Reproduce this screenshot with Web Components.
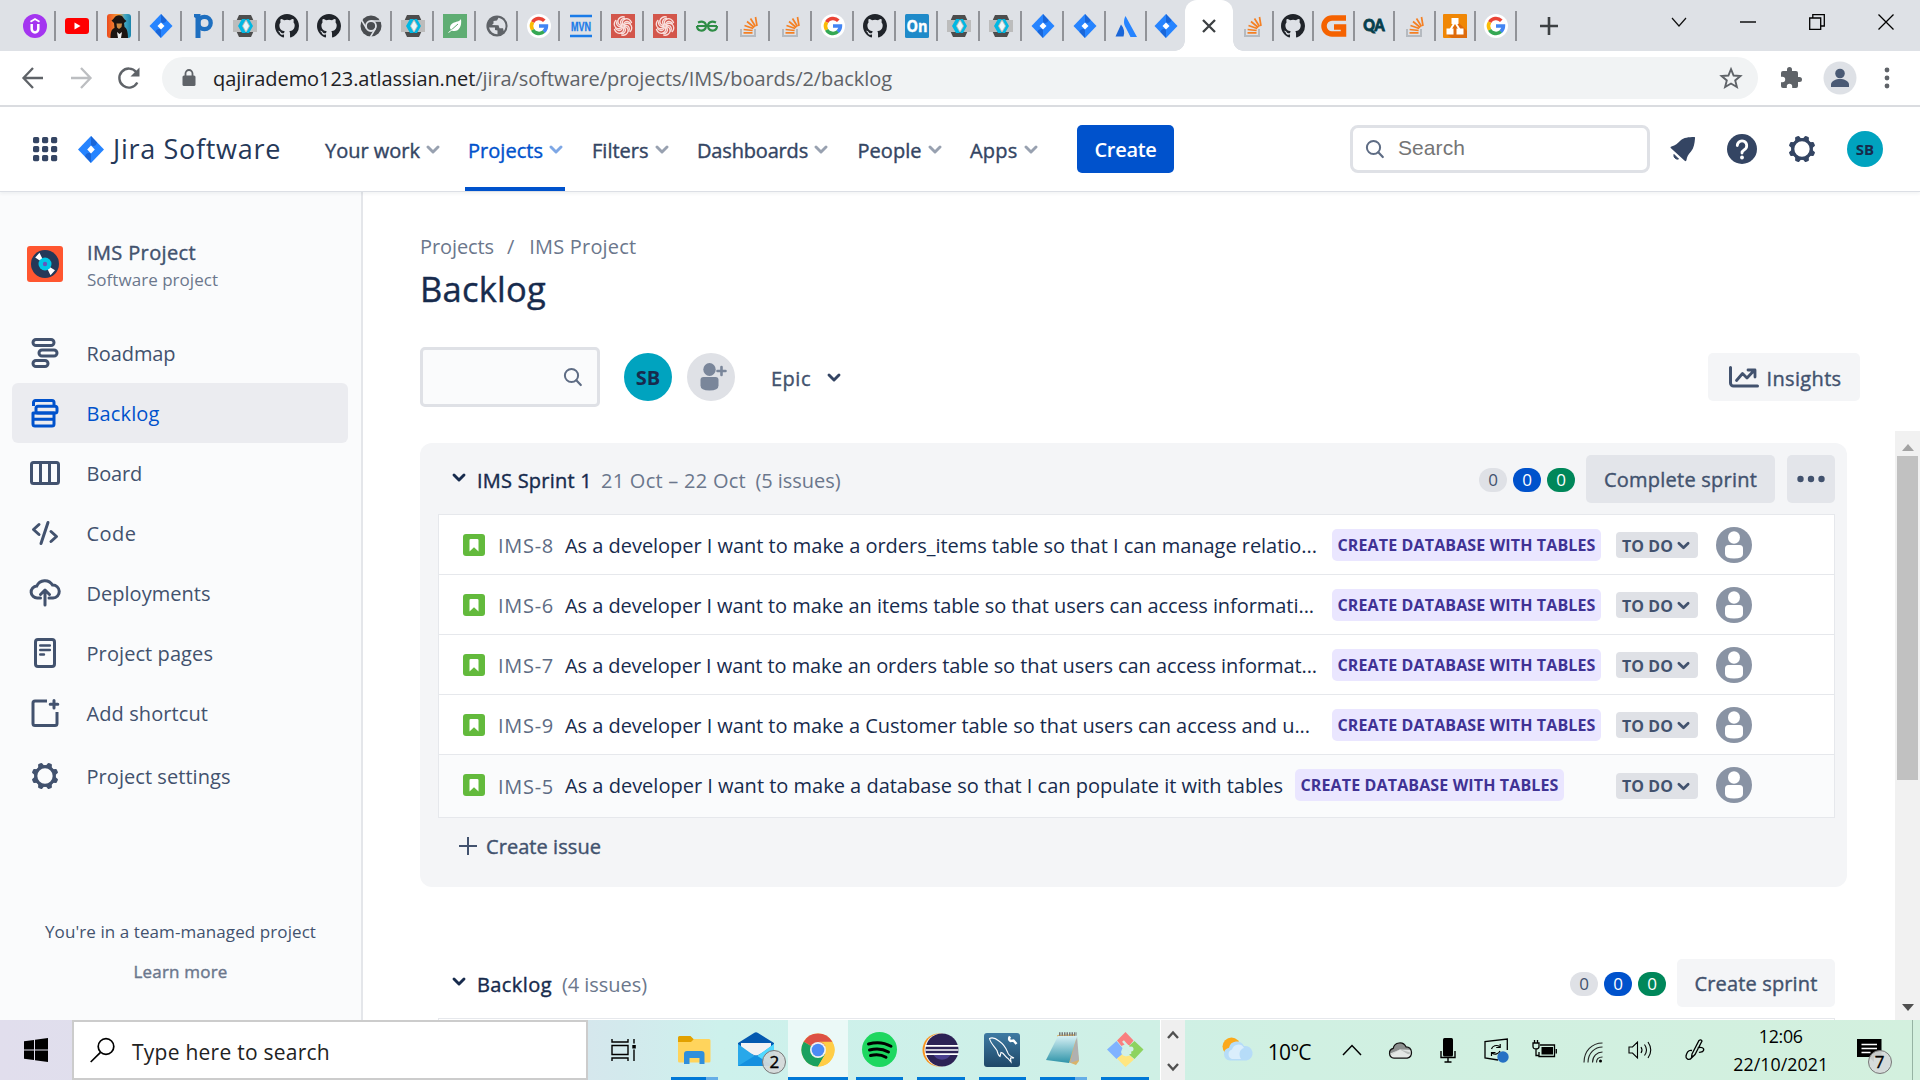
<!DOCTYPE html>
<html lang="en">
<head>
<meta charset="utf-8">
<title>Backlog - IMS Project - Jira</title>
<style>
html,body{margin:0;height:100%;overflow:hidden;background:#fff}
body{font-family:"Open Sans","Noto Sans",sans-serif;font-size:20px;color:#172b4d}
</style>
</head>
<body>
<desktop-app></desktop-app>
<script>
const FAV = {
udemy:`<circle cx="12" cy="12" r="12" fill="#a435f0"/><path d="M7.500 7.800 12 5 16.500 7.800" fill="none" stroke="#fff" stroke-width="1.800"/><path d="M8.700 10v5a3.300 3.400 0 0 0 6.600 0v-5" fill="none" stroke="#fff" stroke-width="2.500"/>`,
youtube:`<rect y="4" width="24" height="16" rx="3" fill="#f00"/><path d="M9.500 8.500v7l6-3.500z" fill="#fff"/>`,
poster:`<defs><linearGradient id="a"><stop stop-color="#ec4a1c"/><stop offset=".5" stop-color="#f7a23b"/><stop offset=".75" stop-color="#3fa6c4"/><stop offset="1" stop-color="#1c84ab"/></linearGradient></defs><rect width="24" height="24" rx="3" fill="url(#a)"/><path d="M4.500 6.500C6 6 7.500 3 9 2c2-1 4-1 6 0 1.500 1.500 2 3.500 4.500 5l-2.500 2 .500 4c2 1 3.500 4 3.500 11H3.500c0-6 1-9 4-10L7 9z" fill="#1c1512"/><path d="M9.500 9.500h5.500l-.500 3.500-2.500 2-2-1.500z" fill="#c98a45"/><path d="m10 18 1 6h3l1-6-2.500 2z" fill="#eee"/>`,
jira:`<path d="M12 0 23.500 12 12 24 .5 12z" fill="#2684ff"/><path d="m12 0 5.500 6c-1 3-3 3.500-5.500 2.500z" fill="#1a66d8"/><path d="m12 24-5.500-6c1-3 3-3.500 5.500-2.500z" fill="#1a66d8"/><path d="m12 8.500 3.500 3.500-3.500 3.500L8.500 12z" fill="#fff"/>`,
pluto:`<path d="M3 0h6.500v24H4.500V4L3 3z" fill="#1e6fc0"/><circle cx="13.500" cy="9" r="6.200" fill="none" stroke="#1e6fc0" stroke-width="4.300"/>`,
keycloak:`<path d="M6 1h12l5 11-5 11H6L1 12z" fill="#4d4d4d"/><rect y="6" width="24" height="12" fill="#bcbcbc"/><path d="M9 5h4l-4 7 4 7H9l-4-7zM13 5h3l4 7-4 7h-3l4-7z" fill="#00b8e3"/><path d="M10 12 13 7l3 5-3 5z" fill="#eaf8fb"/>`,
github:`<path transform="scale(1.5)" d="M8 0C3.580 0 0 3.580 0 8c0 3.540 2.290 6.530 5.470 7.590.4.070.55-.17.55-.38v-1.490c-2.010.37-2.530-.49-2.690-.94-.09-.23-.48-.94-.82-1.130-.28-.15-.68-.52-.01-.53.63-.01 1.080.58 1.230.82.72 1.210 1.870.87 2.330.66.07-.52.28-.87.51-1.070-1.780-.2-3.640-.89-3.640-3.950 0-.87.31-1.590.82-2.150-.08-.2-.36-1.020.08-2.120 0 0 .67-.21 2.200.82a7.600 7.600 0 0 1 4 0c1.530-1.040 2.200-.82 2.200-.82.44 1.100.16 1.920.08 2.120.51.56.82 1.270.82 2.150 0 3.070-1.870 3.750-3.650 3.950.29.25.54.73.54 1.480v2.200c0 .21.15.46.55.38A8 8 0 0 0 16 8c0-4.420-3.580-8-8-8z" fill="#20242a"/>`,
chrome:`<circle cx="12" cy="12" r="10.500" fill="#4a4d51"/><circle cx="12" cy="12" r="5" fill="none" stroke="#dee1e6" stroke-width="1.800"/><path d="M12 7h10M7.600 14.500 2.500 6M16.400 14.500l-5 8.500" stroke="#dee1e6" stroke-width="1.500"/>`,
leaf:`<rect width="24" height="24" fill="#5fad73"/><path d="M18 5c1 7-2 13-8 12-4-1-4-6 0-8 3-1.500 6-1 8-4z" fill="#fff"/><path d="m6 18 9-8" stroke="#5fad73"/><path d="m5.500 18.500 4-3" stroke="#fff"/>`,
globe:`<circle cx="12" cy="12" r="10.600" fill="#5f6368"/><path d="M4 13.500l6 0v2.500l2.500.500V20.200A8.500 8.500 0 0 1 4 13.500zM13.500 3.800 12 6.500 8.500 7v2.500L7 11l6.500.300 1 3H18l.800 3A8.500 8.500 0 0 0 13.500 3.800z" fill="#dee1e6"/>`,
google:`<circle cx="12" cy="12" r="12" fill="#fff"/><g fill="none" stroke-width="3.600"><path d="M5.600 8.200A7.400 7.400 0 0 1 17.300 6.700" stroke="#ea4335"/><path d="M5.600 15.800a7.400 7.400 0 0 1 0-7.600" stroke="#fbbc05"/><path d="M17 17.500a7.400 7.400 0 0 1-11.400-1.700" stroke="#34a853"/><path d="M12 12h7.400a7.400 7.400 0 0 1-2.600 5.600" stroke="#4285f4"/></g>`,
mvn:`<path d="M1 2h22M1 22h22" stroke="#1a7be8" stroke-width="2.500"/><text x="12" y="16.500" text-anchor="middle" textLength="20" lengthAdjust="spacingAndGlyphs" font-family="Liberation Sans" font-weight="700" font-size="12.500" fill="#1a7be8" stroke="#1a7be8" stroke-width=".3">MVN</text>`,
swirl:`<rect width="24" height="24" fill="#d3564b"/><g fill="none" stroke="#f9dfdc" stroke-width="1.350" stroke-linecap="round">${[0,60,120,180,240,300].map(a=>`<path transform="rotate(${a} 12 12)" d="M12 11c-1.500-2.500-.500-5 2-6s5.500.500 6.500 3.500M12.800 10.500c0-2 1.500-3.200 3.500-3 1.500.200 2.500 1 3 2"/>`).join('')}</g>`,
gfg:`<g fill="none" stroke="#2f8d46" stroke-width="2.200"><path d="M2 12h20M3 8.500c5-2 8 0 8 3.500s-3 5-5.500 4.500S2 14 2 12M21 8.500c-5-2-8 0-8 3.500s3 5 5.500 4.500S22 14 22 12"/></g>`,
so:`<path d="M4 15v7h14v-7" fill="none" stroke="#b5bac0" stroke-width="2"/><path d="M6.500 18.800h9M6.600 15.500l9 1M7.500 11.500l8.700 3M10 7.500l7.300 6M13.500 4.500l5 8M18.500 3l1.500 9" stroke="#f48024" stroke-width="1.700"/>`,
on:`<rect width="24" height="24" rx="1.500" fill="#1f8ac9"/><text x="12" y="17.500" text-anchor="middle" textLength="21" lengthAdjust="spacingAndGlyphs" font-family="Open Sans" font-weight="700" font-size="16" fill="#fff" stroke="#fff" stroke-width=".4">On</text>`,
atlas:`<path d="M11.500 2C9 7 10 11 12 14l4.500 9H23z" fill="#2684ff"/><path d="M7 10.500 1.500 22.500h8C11 18 10 14 7 10.500z" fill="#1a66d8"/>`,
orange:`<path d="M24 4H10a7.500 7.500 0 0 0 0 16h11.500v-7H12" fill="none" stroke="#f56200" stroke-width="5.500"/>`,
qa:`<text x="12" y="17" text-anchor="middle" textLength="21.500" lengthAdjust="spacingAndGlyphs" font-family="Lato" font-weight="900" font-size="16" fill="#073f4d" stroke="#073f4d" stroke-width=".9">QA</text>`,
draw:`<rect width="24" height="24" rx="1" fill="#f08705"/><path d="M14 9h2l8 8v7H9l-6-4z" fill="#de6b0c"/><path d="M12 8 6 18M12 8l6 10" stroke="#fff" stroke-width="2"/><path d="M8.500 4h7v6h-7zM3.500 14.500h7v6h-7zM13.500 14.500h7v6h-7z" fill="#fff"/>`
};
const gear = c => `<circle cx="14" cy="14" r="9.300" fill="none" stroke="${c}" stroke-width="3.300"/>` +
  [0,45,90,135,180,225,270,315].map(a=>`<path transform="rotate(${a+22.5} 14 14)" d="M10.800 4.300 11.700 1.500q.2-.9 1-.9h2.600q.8 0 1 .9l.9 2.800z" fill="${c}"/>`).join('');
const person = `<circle cx="18" cy="18" r="18" fill="#8993a4"/><ellipse cx="18" cy="10.500" rx="6" ry="6.200" fill="#fff"/><path d="M9 21.500a3.500 3.500 0 0 1 3.500-3.500h11a3.500 3.500 0 0 1 3.500 3.500V27q0 4.500-9 4.500T9 27z" fill="#fff"/>`;
const ICON = {
chev:[14,9,`<path d="m2 2 5 5 5-5" fill="none" stroke="currentColor" stroke-width="2.900" stroke-linecap="round" stroke-linejoin="round"/>`],
back:[24,24,`<path d="M22 12H3M12 2 2.500 12 12 22" fill="none" stroke="currentColor" stroke-width="2.300"/>`],
fwd:[24,24,`<path d="M2 12h19M12 2l9.500 10L12 22" fill="none" stroke="currentColor" stroke-width="2.300"/>`],
reload:[24,24,`<path d="M20.300 16.500A9.500 9.500 0 1 1 19.200 6" fill="none" stroke="#5f6368" stroke-width="2.400"/><path d="M22.500 1.500v9h-9z" fill="#5f6368"/>`],
lock:[14,18,`<rect y="6.500" x=".5" width="13" height="10.500" rx="1.500" fill="#5f6368"/><path d="M3.500 7V4.500a3.500 3.500 0 0 1 7 0V7" fill="none" stroke="#5f6368" stroke-width="1.800"/>`],
star:[24,24,`<path d="m12 3.200 2.600 6.300 6.800.5-5.200 4.400 1.700 6.700-5.900-3.600-5.900 3.600 1.700-6.700L2.600 10l6.800-.5z" fill="none" stroke="#5f6368" stroke-width="1.900"/>`],
puzzle:[24,24,`<path d="M20.500 11H19V7a2 2 0 0 0-2-2h-4V3.500a2.500 2.500 0 0 0-5 0V5H4a2 2 0 0 0-2 2v3.800h1.500a2.700 2.700 0 0 1 0 5.400H2V20a2 2 0 0 0 2 2h3.800v-1.500a2.700 2.700 0 0 1 5.400 0V22H17a2 2 0 0 0 2-2v-4h1.500a2.500 2.500 0 0 0 0-5z" fill="#5f6368"/>`],
profile:[34,34,`<circle cx="17" cy="17" r="16.500" fill="#dee1e6"/><circle cx="17" cy="12.500" r="4.800" fill="#4a5a74"/><path d="M8 26v-2.500c0-3.500 5-5.500 9-5.500s9 2 9 5.500V26z" fill="#4a5a74"/>`],
vdots:[6,22,`<circle cx="3" cy="3" r="2.400" fill="#5f6368"/><circle cx="3" cy="11" r="2.400" fill="#5f6368"/><circle cx="3" cy="19" r="2.400" fill="#5f6368"/>`],
grid:[24,24,[0,9,18].map(x=>[0,9,18].map(y=>`<rect x="${x}" y="${y}" width="6.200" height="6.200" rx="1.600" fill="#344563"/>`).join('')).join('')],
jira:[26,27,`<path d="M13 0 26 13.500 13 27 0 13.500z" fill="#2684ff"/><path d="m13 0 6 6.500C18 10 16 10.500 13 9.500z" fill="#1a66d8"/><path d="m13 27-6-6.500c1-3.500 3-4 6-3z" fill="#1a66d8"/><path d="m13 9.500 3.800 4-3.800 4-3.800-4z" fill="#fff"/>`],
glass:[20,20,`<circle cx="8.500" cy="8.500" r="6.600" fill="none" stroke="#5e6c84" stroke-width="2"/><path d="m13.300 13.300 4.500 4.700" stroke="#5e6c84" stroke-width="2.200" stroke-linecap="round"/>`],
bell:[26,26,`<path d="M1.500 10.500c4-1 6-3 9-6S19 1 24 1c1 0 1.300.5 1 1.500-.5 5-1 9.500-4 13s-4 5-4.500 8.500c-.2 1.200-1 1.500-1.800.700L1 12.300c-.8-.8-.5-1.600.5-1.800z" fill="#344563"/><path d="M4 18.500a3.700 3.700 0 0 0 4.500 4.500z" fill="#344563" stroke="#344563"/>`],
help:[30,30,`<circle cx="15" cy="15" r="15" fill="#344563"/><path d="M10.300 11.500a4.700 4.700 0 1 1 7 4.200c-1.500.9-2.300 1.500-2.300 3.300" fill="none" stroke="#fff" stroke-width="2.800" stroke-linecap="round"/><circle cx="15" cy="23.500" r="1.900" fill="#fff"/>`],
gear:[28,28,gear('#344563')], gear2:[28,28,gear('#42526e')],
vinyl:[36,36,`<rect width="36" height="36" rx="3" fill="#ff5630"/><circle cx="18" cy="18" r="14" fill="#253858"/><path d="m18 18-9.800-6.500 4.300-4.700zM18 18l10 6.200-4.500 5z" fill="#fff"/><circle cx="18" cy="18" r="6.500" fill="#00c7e6"/><circle cx="18" cy="18" r="2.200" fill="#6554c0"/>`],
roadmap:[30,32,`<g fill="none" stroke="#42526e" stroke-width="3"><rect x="3" y="2.500" width="21" height="6" rx="3"/><rect x="9" y="13" width="18" height="6" rx="3"/><rect x="3" y="23.500" width="15" height="6" rx="3"/></g>`],
backlog:[30,30,`<g fill="none" stroke="#0052cc" stroke-width="3" stroke-linejoin="round"><path d="M3.500 8V4.500a2 2 0 0 1 2-2H22a2 2 0 0 1 2 2V8"/><rect x="6" y="8.300" width="21" height="6.700" rx="2"/><path d="M3 15h21v11a2 2 0 0 1-2 2H5a2 2 0 0 1-2-2zM3 21.300h21"/></g>`],
board:[30,24,`<rect x="1.500" y="1.500" width="27" height="21" rx="2" fill="none" stroke="#42526e" stroke-width="3"/><path d="M10.500 2v20M19.500 2v20" stroke="#42526e" stroke-width="3"/>`],
code:[28,26,`<path d="M8 4.500 2.500 9.500 8 14.500M20 11.500l5.500 5-5.500 5M17 2.500l-7 21" fill="none" stroke="#42526e" stroke-width="3" stroke-linecap="round" stroke-linejoin="round"/>`],
deploy:[30,28,`<path d="M10.500 19H7.500a6 6 0 0 1-.7-12A8.800 8.800 0 0 1 22.500 6a6.500 6.500 0 0 1 .5 13h-4" fill="none" stroke="#42526e" stroke-width="3" stroke-linecap="round"/><path d="M15 26V12M10.500 15.500 15 11l4.500 4.500" fill="none" stroke="#42526e" stroke-width="3" stroke-linecap="round" stroke-linejoin="round"/>`],
pages:[22,30,`<rect x="1.500" y="1.500" width="19" height="27" rx="2.500" fill="none" stroke="#42526e" stroke-width="3"/><path d="M6.300 7.500h9.500M6.300 12h9.500M6.300 16.500h3.600" stroke="#42526e" stroke-width="2.600" stroke-linecap="round"/>`],
shortcut:[30,30,`<path d="M17 3H5a2 2 0 0 0-2 2v20.500a2 2 0 0 0 2 2h20a2 2 0 0 0 2-2V14" fill="none" stroke="#42526e" stroke-width="3"/><path d="M24 2.500v7.500M20.200 6.200h7.600" stroke="#42526e" stroke-width="3" stroke-linecap="round"/>`],
addp:[48,48,`<circle cx="24" cy="24" r="24" fill="#dfe1e6"/><ellipse cx="22.500" cy="16.500" rx="6.200" ry="6.500" fill="#7a869a"/><path d="M13.500 27q0-3 3-3h12q3 0 3 3v5.500q0 5-9 5t-9-5z" fill="#7a869a"/><path d="M34.500 14v8M30.500 18h8" stroke="#7a869a" stroke-width="2.600" stroke-linecap="round"/>`],
insights:[30,22,`<path d="M1.500 1.500V17a3 3 0 0 0 3 3H28.500" fill="none" stroke="#42526e" stroke-width="3" stroke-linecap="round"/><path d="m7.500 14.500 6-7 4.500 4.500 7-7.500M19 4h7v7" fill="none" stroke="#42526e" stroke-width="2.800" stroke-linecap="round" stroke-linejoin="round"/>`],
story:[22,22,`<rect width="22" height="22" rx="3" fill="#63ba3c"/><path d="M6.500 6.300A1.300 1.300 0 0 1 7.800 5h6.400a1.300 1.300 0 0 1 1.300 1.300v11.200L11 13.200l-4.500 4.300z" fill="#fff"/>`],
person:[36,36,person],
dots:[28,8,`<circle cx="3.500" cy="4" r="3.200" fill="#42526e"/><circle cx="14" cy="4" r="3.200" fill="#42526e"/><circle cx="24.500" cy="4" r="3.200" fill="#42526e"/>`],
plus:[18,18,`<path d="M9 0v18M0 9h18" stroke="#42526e" stroke-width="2"/>`],
nplus:[18,18,`<path d="M9 0v18M0 9h18" stroke="#3c4043" stroke-width="2.600"/>`],
tabx:[14,14,`<path d="m1 1 12 12M13 1 1 13" stroke="#3c4043" stroke-width="2.300"/>`],
wchev:[16,10,`<path d="m1 1 7 8 7-8" fill="none" stroke="#111" stroke-width="1.200"/>`],
wmin:[16,2,`<path d="M0 1h16" stroke="#000" stroke-width="1.400"/>`],
wres:[16,16,`<path d="M.7 4h11v11.300h-11zM3.800 4V.7h11.500V12H12" fill="none" stroke="#000" stroke-width="1.300"/>`],
wx:[16,16,`<path d="m.5.500 15 15M15.500.500l-15 15" stroke="#000" stroke-width="1.300"/>`],
up:[12,7,`<path d="m0 7 6-7 6 7z" fill="#a3a3a3"/>`], down:[12,7,`<path d="m0 0 6 7 6-7z" fill="#505050"/>`],
win:[24,24,`<path d="M0 3.300 10 2v9.500H0zM11 1.800 24 0v11.500H11zM0 12.500h10V22L0 20.700zM11 12.500h13V24l-13-1.800z" fill="#000"/>`],
bigglass:[25,25,`<circle cx="16" cy="8.500" r="7.800" fill="none" stroke="#000" stroke-width="1.700"/><path d="M10.500 14.300.7 24" stroke="#000" stroke-width="1.700"/>`],
taskview:[26,24,`<path d="M1 1v3h16V1M1 23v-3h16v3M1 7.500h16v9H1zM23 1v4.500M23 11.500V23" fill="none" stroke="#000" stroke-width="1.400"/><path d="M21.300 7h3.500v3.500h-3.500z"/>`],
explorer:[33,30,`<path d="M0 2.500A1.500 1.500 0 0 1 1.500 1h11L16 4.500 14 9H0z" fill="#e2a100"/><path d="M0 7h13l3-3h15q1.500 0 1.500 1.500V26q0 1.500-1.500 1.500H1.500Q0 27.500 0 26z" fill="#ffd45c"/><path d="M6 28V19q0-3 3-3h14.500q3 0 3 3v10h-5v-6h-10v6H6z" fill="#2f8fdc"/>`],
mail:[36,35,`<path d="M0 11 16 1q2-1.300 4 0l16 10v3L18 25 0 14z" fill="#0459b0"/><path d="M3 11h30v6L18 24 3 17z" fill="#f2f2f4"/><path d="M0 12v22h36V12L18 25z" fill="#28a8ea"/><path d="M36 12v22L18 25z" fill="#50d9ff"/><path d="m0 34 18-11 17 11z" fill="#1490df"/>`],
chromec:[34,34,`<circle cx="17" cy="17" r="16.500" fill="#ffcd46"/><path d="M17 17 2.700 8.700A16.500 16.500 0 0 1 31.300 8.700z" fill="#dd5144"/><path d="M17 17 2.700 8.700A16.500 16.500 0 0 0 17 33.500l7-12z" fill="#1aa15f"/><path d="M31.300 8.700H17a8.300 8.300 0 0 1 7.200 12.500L17 33.500A16.500 16.500 0 0 0 31.300 8.700z" fill="#ffcd46"/><circle cx="17" cy="17" r="8" fill="#f1f1f1"/><circle cx="17" cy="17" r="6.300" fill="#4c8bf5"/>`],
spotify:[35,35,`<circle cx="17.500" cy="17.500" r="17.500" fill="#1ed760"/><path d="M6.500 12c8-2.200 16-1.400 22.500 2.300M7.500 18c7-2 13.500-1.200 19 2M8.500 23.500c6-1.600 11-1 15.500 1.800" fill="none" stroke="#000" stroke-width="3" stroke-linecap="round"/>`],
eclipse:[37,34,`<circle cx="17" cy="17" r="16.500" fill="#f7941e"/><circle cx="19" cy="17" r="16.500" fill="#fff"/><circle cx="20" cy="17" r="16.500" fill="#2c2255"/><path d="M11 21a10 10 0 0 0 18 0z" fill="#4a3f8f"/><path d="M3.500 12.800h33M3.500 17h33M3.500 21.200h33" stroke="#fff" stroke-width="1.700"/>`],
mysql:[36,34,`<defs><linearGradient id="m" x2="0" y2="1"><stop stop-color="#3e7ba3"/><stop offset="1" stop-color="#1f4868"/></linearGradient></defs><rect width="36" height="34" rx="3" fill="url(#m)"/><path d="M5.500 5.500c3-1.500 7 .500 9.500 2.500 5 3.500 7 7 8.500 11 .500 2.500 2 4 6.500 6l-3.500 0 .500 4-3-3.500c-2-1-3.500-4-5.500-5.500l-1.500-.500-1 4c-2-1-2.500-4-3-6C10 13 6.500 10 5.500 5.500z" fill="none" stroke="#fff" stroke-width="1.100"/><path d="M26 3.500q-2 3 .500 4.500l3-.500 3 3.500" stroke="#fff" stroke-width="2.500" fill="none"/>`],
notepad:[35,33,`<defs><linearGradient id="n" x2="0" y2="1"><stop stop-color="#d6f0f4"/><stop offset="1" stop-color="#2f94a9"/></linearGradient></defs><path d="m11 2 18-1 4 27-3 4-8-3z" fill="#d9b36a"/><path d="m31 3 2 24-9 3z" fill="#b0b0b0"/><path d="M12 3h19l-8 27L0 27z" fill="url(#n)"/><path d="M13 1h18" stroke="#777" stroke-width="3.500" stroke-dasharray="1.500 1"/>`],
git:[37,35,`<path d="m18.500 0 8 8.500-4 5-4-1.500-4 2-4.500-5.500z" fill="#f97f7f"/><path d="m9.500 9 6 7-1.500 4 1 3-5.500 4L0 17.500z" fill="#80b3ff"/><path d="m27.500 9 9 8.500-9 9.500-5-4 .5-5-1-4z" fill="#8dd35f"/><path d="m18.500 35-8.500-8.500 6-5 2.500 3 4.500-1 4 4z" fill="#ffe680"/><path d="m16 9 7 8v5" fill="none" stroke="#d2f0e8" stroke-width="2.500"/><circle cx="18" cy="21" r="3" fill="#d2f0e8"/><circle cx="24" cy="17" r="2.500" fill="#d2f0e8"/>`],
sup:[12,8,`<path d="m1 7 5-5.500L11 7" fill="none" stroke="#505050" stroke-width="2.400"/>`],
sdown:[12,8,`<path d="m1 1 5 5.500L11 1" fill="none" stroke="#505050" stroke-width="2.400"/>`],
weather:[32,24,`<circle cx="9.500" cy="9.500" r="9" fill="#fba91b"/><path d="M8 23.500a6.500 6.500 0 0 1-1-12.800A8 8 0 0 1 22 9a7.300 7.300 0 0 1 2.500 14.500z" fill="#b6dcf8"/><path d="M10 22a5 5 0 0 1 0-9.500A6.500 6.500 0 0 1 22 11c-4 1-6 6-3 11z" fill="#daeefc"/>`],
caret:[20,12,`<path d="m1 11 9-9.500L19 11" fill="none" stroke="#000" stroke-width="1.500"/>`],
cloud:[25,18,`<path d="M6 17.200a5 5 0 0 1-.8-9.800A6.800 6.800 0 0 1 18 5.800a5.800 5.800 0 0 1 1.200 11.400z" fill="#dfe3e1"/><path d="M1 13A5 5 0 0 1 5.200 7.400 6.800 6.800 0 0 1 18 5.800q3.500.200 5 3L12 8.500z" fill="#8c8f8e"/><path d="M12 8.500 1.500 14.500q1.500 2.700 4.500 2.700L24 12z" fill="#b9bdbb"/><path d="m12 8.500 11 6.500q-2 2.200-4 2.200H6q-3 0-4.500-2.500z" fill="#e4e7e5"/><path d="M6 17.200a5 5 0 0 1-.8-9.800A6.800 6.800 0 0 1 18 5.800a5.800 5.800 0 0 1 1.200 11.400z" fill="none" stroke="#111" stroke-width="1.200"/>`],
mic:[16,25,`<rect x="3" y="0" width="10" height="18.500" rx="1.500"/><path d="M1 13v6.500h14V13M8 19.500V24M4.500 24h7" fill="none" stroke="#000" stroke-width="1.400"/>`],
update:[25,25,`<path d="M23.300 12V1L1 3.500V20l13 2" fill="none" stroke="#000" stroke-width="1.300"/><path d="M7.500 11a5 4.500 0 0 1 8-2.500M16.200 6v3.500h-4M16 13a5 4.500 0 0 1-8 2M7.500 18v-3.500h4" fill="none" stroke="#000" stroke-width="1.200"/><circle cx="19" cy="19" r="5.700" fill="#2671c4"/>`],
battery:[25,18,`<path d="M8 5h14.500v11.500H7V12M24.300 9v4.500" fill="none" stroke="#000" stroke-width="1.300"/><path d="M9.500 7H21v7.500H9.500z"/><path d="M1 3h6V6.500q0 2.500-3 2.500T1 6.500zM2.500 3V0M5.500 3V0M4 9v6.500h3" fill="none" stroke="#000" stroke-width="1.300"/>`],
wifi:[20,21,`<path d="M1 20.500C1 9 9 1 19.500 1M5 20.500C5 11 12 5 19.500 5M9.500 20.500C9.500 14 14 10 19.500 10M13.500 20.500c0-3 2-5.500 6-5.500" fill="none" stroke="#222" stroke-width="1.100"/><circle cx="17.500" cy="19" r="1.500"/>`],
volume:[24,20,`<path d="M1 7v6h3.500l5 5V2L4.500 7zM13 7q2 3 0 6M16.500 4.500q4 5.500 0 11M20 2q5.500 8 0 16" fill="none" stroke="#000" stroke-width="1.100"/>`],
pen:[22,22,`<path d="M9 15 16 1.500q2-1.500 3 .5L12 15.500 8.500 19zM14.500 9c4-1.500 7 0 6 2.500s-3.500 1-4.500 2M9 11.500c-4-1-5.500 3-6 5.500-.500 3 3 4.500 5 2.500s.500-4 .500-4" fill="none" stroke="#000" stroke-width="1.300"/>`],
notif:[25,23,`<path d="M0 0h24.500v18H17v5l-5-5H0z"/><path d="M4.500 5.500H20M4.500 9.500H20M4.500 13.500h9" stroke="#fff" stroke-width="1.300"/>`]
};
function define(name, css, html, after){
  const t = document.createElement('template');
  if (typeof html === 'string') t.innerHTML = `<style>${css}</style>${html}`;
  customElements.define(name, class extends HTMLElement{
    connectedCallback(){
      if (this.shadowRoot) return;
      const r = this.attachShadow({mode:'open'});
      if (typeof html === 'string') r.append(document.importNode(t.content, true));
      else r.innerHTML = `<style>${css}</style>${html(this)}`;
      if (after) after(this, r);
    }
  });
}
/* Inline text with an advance width; tracking is adjusted to fill it.
   Weight 500 has no face of its own, so a hairline stroke thickens the regular one. */
define('fit-text', `:host{display:block;flex:none;white-space:pre}`, `<slot></slot>`, el=>{
  const c = getComputedStyle(el);
  if (c.fontWeight === '500') el.style.webkitTextStroke = '.4px';
  const w = +el.getAttribute('w'); if(!w) return;
  const s = document.createElement('canvas').getContext('2d');
  s.font = `${c.fontWeight} ${c.fontSize} ${c.fontFamily}`;
  const n = el.textContent.length;
  el.style.letterSpacing = ((w - s.measureText(el.textContent).width)/n).toFixed(3)+'px';
  el.style.width = w+'px';
});
define('ui-icon', `:host{display:block;flex:none;line-height:0}svg{display:block;overflow:visible}`, el=>{
  const [w,h,b] = ICON[el.getAttribute('name')];
  return `<svg width="${el.getAttribute('width')||w}" height="${el.getAttribute('height')||h}" viewBox="0 0 ${w} ${h}">${b}</svg>`;
});
define('fav-tab', `:host{display:flex;flex:none;width:42px;height:30px;align-items:center;justify-content:center;box-sizing:border-box;border-right:2px solid #919398;padding-left:1px}
:host([narrow]){width:40.5px}:host([bare]){border-color:transparent}svg{display:block;overflow:visible}`, el=>`<svg width="24" height="24" viewBox="0 0 24 24">${FAV[el.getAttribute('name')]}</svg>`);
define('browser-tabs', `:host{display:flex;height:51px;background:#dee1e6;box-sizing:border-box;padding-left:14px}
.t{display:flex;padding-top:11px}
.active{width:48px;flex:none;height:51px;margin-left:-2px;background:#fff;border-radius:12px 12px 0 0;display:flex;align-items:center;justify-content:center;position:relative}
.active:before,.active:after{content:"";position:absolute;bottom:0;width:10px;height:10px}
.active:before{left:-10px;background:radial-gradient(circle at 0 0,transparent 9.500px,#fff 10px)}
.active:after{right:-10px;background:radial-gradient(circle at 100% 0,transparent 9.500px,#fff 10px)}
.plus{margin:17px 0 0 23.500px}.ctl{display:flex;margin-left:auto;height:44px;align-items:center}.ctl div{width:69px;display:flex;justify-content:center}`,
()=>{const a='udemy youtube poster jira pluto keycloak github github chrome keycloak leaf globe google mvn swirl swirl gfg so so google github on keycloak keycloak jira jira'.split(' ');
return `<div class="t">${a.map(n=>`<fav-tab name="${n}"></fav-tab>`).join('')}<fav-tab narrow name="atlas"></fav-tab><fav-tab narrow bare name="jira"></fav-tab></div><div class="active"><ui-icon name="tabx"></ui-icon></div><div class="t">${'so github orange qa so draw google'.split(' ').map(n=>`<fav-tab narrow name="${n}"></fav-tab>`).join('')}</div><ui-icon class="plus" name="nplus"></ui-icon><div class="ctl"><div><ui-icon name="wchev"></ui-icon></div><div><ui-icon name="wmin"></ui-icon></div><div><ui-icon name="wres"></ui-icon></div><div><ui-icon name="wx"></ui-icon></div></div>`});
define('browser-toolbar', `:host{display:flex;align-items:center;height:56px;box-sizing:border-box;border-bottom:2px solid #dadce0;background:#fff;padding-left:21px;color:#5f6368}
.box{display:flex;align-items:center;width:1596px;height:42px;background:#f1f3f4;border-radius:21px;margin-left:21px;box-sizing:border-box;padding:0 15px 0 20px}
b{font-weight:400;color:#202124}.star{margin-left:auto}`,
`<ui-icon name="back"></ui-icon><ui-icon name="fwd" style="margin-left:24px;color:#bcbec1"></ui-icon><ui-icon name="reload" style="margin-left:24px"></ui-icon>
<div class="box"><ui-icon name="lock"></ui-icon><fit-text w="679" style="margin-left:17px"><b>qajirademo123.atlassian.net</b>/jira/software/projects/IMS/boards/2/backlog</fit-text><ui-icon class="star" name="star"></ui-icon></div>
<ui-icon name="puzzle" style="margin-left:21px"></ui-icon><ui-icon name="profile" style="margin-left:20px"></ui-icon><ui-icon name="vdots" style="margin-left:27px"></ui-icon>`);
define('nav-link', `:host{display:flex;height:84px;align-items:center;box-sizing:border-box;border-bottom:4px solid transparent;border-top:4px solid transparent;padding:2px 2px 0 3px;color:#344563;font-weight:500;gap:6px}
:host([active]){color:#0052cc;border-bottom-color:#0052cc}ui-icon{opacity:.5;margin-top:-2px}`, el=>`<fit-text w="${el.getAttribute('w')}">${el.getAttribute('label')}</fit-text><ui-icon name="chev"></ui-icon>`);
define('user-avatar', `:host{display:flex;flex:none;width:var(--s,36px);height:var(--s,36px);border-radius:50%;background:#00a3bf;color:#172b4d;align-items:center;justify-content:center;font-weight:700}`, `<slot></slot>`);
define('jira-nav', `:host{display:flex;align-items:center;height:85px;box-sizing:border-box;border-bottom:1px solid #dcdfe5;background:#fff;padding-left:33px;position:relative;z-index:1;box-shadow:0 2px 3px #091e420d}
.logo{font-size:27px;color:#253858;margin:-2px 42px 0 9px}
nav{display:flex}.create{width:97px;height:48px;border-radius:5px;background:#0052cc;color:#fff;font-weight:600;display:flex;align-items:center;justify-content:center;padding-top:1px;box-sizing:border-box}
.search{width:300px;height:48px;box-sizing:border-box;border:3px solid #dfe1e6;border-radius:8px;margin-left:176px;display:flex;align-items:center;padding-left:12px;gap:13px;font:21px "Liberation Sans",sans-serif;color:#757575}`,
`<ui-icon name="grid"></ui-icon><ui-icon name="jira" style="margin-left:21px"></ui-icon><fit-text class="logo" w="168">Jira Software</fit-text>
<nav><nav-link label="Your work" w="95" style="margin-left:-1px"></nav-link><nav-link active label="Projects" w="75" style="margin-left:23px"></nav-link><nav-link label="Filters" w="56.500" style="margin-left:24px"></nav-link><nav-link label="Dashboards" w="111" style="margin-left:23.500px"></nav-link><nav-link label="People" w="64" style="margin-left:24.500px"></nav-link><nav-link label="Apps" w="47.500" style="margin-left:23.500px"></nav-link></nav>
<div class="create" style="margin-left:37.500px"><fit-text w="62">Create</fit-text></div>
<div class="search"><ui-icon name="glass"></ui-icon><fit-text w="67" style="margin-top:-2px">Search</fit-text></div>
<ui-icon name="bell" style="margin-left:20px"></ui-icon><ui-icon name="help" style="margin-left:31px"></ui-icon><ui-icon name="gear" style="margin-left:31px"></ui-icon><user-avatar style="margin-left:31px;font-size:15px">SB</user-avatar>`);
define('side-item', `:host{display:flex;align-items:center;height:60px;margin:0 13px 0 12px;border-radius:6px;color:#42526e}
:host([selected]){background:#ebecf0;color:#0052cc}.i{width:66px;display:flex;justify-content:center;box-sizing:border-box}fit-text{margin-left:8.500px}`,
el=>`<div class="i"><ui-icon name="${el.getAttribute('icon')}"></ui-icon></div><fit-text w="${el.getAttribute('w')}">${el.textContent}</fit-text>`);
define('jira-sidebar', `:host{display:block;width:363px;flex:none;height:828px;box-sizing:border-box;border-right:2px solid #e4e6ea;background:#fafbfc}
.p{display:flex;padding:44px 0 0 27px;height:87px}.n{margin-left:24px}.n fit-text{line-height:27px}.f{padding-top:106px;display:flex;flex-direction:column;align-items:center;font-size:17px;line-height:40px}`,
`<div class="p"><ui-icon name="vinyl" style="margin-top:10px"></ui-icon><div class="n"><fit-text w="109" style="font-weight:500;color:#42526e;margin-top:3px">IMS Project</fit-text><fit-text w="131" style="font-size:17px;color:#6b778c">Software project</fit-text></div></div>
<side-item icon="roadmap" w="89">Roadmap</side-item><side-item icon="backlog" selected w="73">Backlog</side-item><side-item icon="board" w="55.500">Board</side-item><side-item icon="code" w="50">Code</side-item><side-item icon="deploy" w="124">Deployments</side-item><side-item icon="pages" w="126.500">Project pages</side-item><side-item icon="shortcut" w="121.500">Add shortcut</side-item><side-item icon="gear2" w="144" style="margin-top:3px">Project settings</side-item>
<div class="f"><fit-text w="271" style="color:#42526e">You're in a team-managed project</fit-text><fit-text w="94" style="color:#6b778c;font-weight:500">Learn more</fit-text></div>`);
define('count-badges', `:host{display:flex;gap:6px;padding-top:2px}span{width:28px;height:24px;border-radius:12px;text-align:center;font-size:17px;line-height:24px;color:#fff}`, `<span style="background:#dfe1e6;color:#42526e">0</span><span style="background:#0052cc">0</span><span style="background:#00875a">0</span>`);
define('ui-button', `:host{display:flex;flex:none;height:48px;border-radius:5px;background:#f4f5f7;color:#42526e;font-weight:500;align-items:center;justify-content:center;gap:8px;box-sizing:border-box}:host([dark]){background:#dfe1e6cc}`, `<slot></slot>`);
define('issue-row', `:host{display:flex;align-items:center;height:60px;box-sizing:border-box;border-bottom:1px solid #e6e8ec;background:#fff;padding-left:24px}
:host([last]){height:62px;background:#fafbfc;padding-bottom:2px;border:0}
.k{color:#5e6c84;margin:2px 0 0 13px}.s{margin:1px 0 0 11px}.e{width:269px;height:32px;border-radius:5px;background:#eae6ff;color:#403294;font-weight:700;font-size:16px;display:flex;align-items:center;justify-content:center}
.st{width:82px;height:26px;border-radius:4px;background:#dfe1e6;color:#42526e;font-weight:700;font-size:16px;display:flex;align-items:center;padding:1px 0 0 6px;box-sizing:border-box;gap:4px;margin-top:1px}.l{display:flex;align-items:center;width:1153px}`,
el=>`<div class="l"><ui-icon name="story"></ui-icon><fit-text class="k" w="56">${el.getAttribute('key')}</fit-text><fit-text class="s" w="${el.getAttribute('w')-1}">${el.textContent}</fit-text><div class="e" style="margin-left:${+el.getAttribute('gap')+1}px"><fit-text w="258">CREATE DATABASE WITH TABLES</fit-text></div></div><div class="st"><fit-text w="51">TO DO</fit-text><ui-icon name="chev" width="13" height="9"></ui-icon></div><ui-icon name="person" style="margin-left:18px"></ui-icon>`);
define('sprint-panel', `:host{display:block;width:1427px;height:444px;box-sizing:border-box;border-radius:12px;background:#f4f5f7;padding:12px 12px 0 18px}
.h{display:flex;align-items:center;height:48px;padding-left:14px}.h>fit-text{padding-top:2px}.list{margin-top:11px;border:1px solid #e6e8ec;height:304px;box-sizing:border-box;overflow:hidden}
.c{display:flex;align-items:center;padding-left:21px;margin-top:11px;height:34px;color:#42526e;font-weight:500}`,
`<div class="h"><ui-icon name="chev" style="margin-top:-4px"></ui-icon><fit-text w="115" style="font-weight:500;margin-left:11px">IMS Sprint 1</fit-text><fit-text w="145" style="color:#6b778c;margin-left:9px">21 Oct – 22 Oct</fit-text><fit-text w="85" style="color:#6b778c;margin-left:9.500px">(5 issues)</fit-text><count-badges style="margin-left:auto"></count-badges><ui-button dark style="width:189px;margin-left:11px"><fit-text w="153" style="padding-top:1px">Complete sprint</fit-text></ui-button><ui-button dark style="width:48px;margin-left:12px"><ui-icon name="dots"></ui-icon></ui-button></div>
<div class="list"><issue-row key="IMS-8" w="753" gap="14">As a developer I want to make a orders_items table so that I can manage relatio...</issue-row><issue-row key="IMS-6" w="750" gap="17">As a developer I want to make an items table so that users can access informati...</issue-row><issue-row key="IMS-7" w="753" gap="14">As a developer I want to make an orders table so that users can access informat...</issue-row><issue-row key="IMS-9" w="746" gap="21">As a developer I want to make a Customer table so that users can access and u...</issue-row><issue-row last key="IMS-5" w="719" gap="11">As a developer I want to make a database so that I can populate it with tables</issue-row></div>
<div class="c"><ui-icon name="plus"></ui-icon><fit-text w="115" style="margin-left:9px">Create issue</fit-text></div>`);
define('scroll-bar', `:host{display:flex;flex-direction:column;align-items:center;width:25px;height:589px;background:#f1f1f1;padding:13px 0 9px;box-sizing:border-box}i{width:21px;height:324px;background:#c1c1c1;margin-top:5px}`, `<ui-icon name="up"></ui-icon><i></i><ui-icon name="down" style="margin-top:auto"></ui-icon>`);
define('backlog-main', `:host{display:block;flex:1;height:828px;overflow:hidden}
.top{height:239px;box-sizing:border-box;padding:40px 60px 0 57px}.bc{display:flex;color:#6b778c;line-height:30px}
h1{font-size:34.500px;line-height:44px;margin:5px 0 0;font-weight:500}
.tools{display:flex;align-items:center;margin-top:36px;height:60px}
.q{width:180px;height:60px;box-sizing:border-box;border:3px solid #dfe1e6;border-radius:5px;background:#fafbfc;display:flex;align-items:center;justify-content:flex-end;padding-right:14px}
.scroll{display:flex;height:589px}.col{padding:12px 0 0 57px;width:1475px}.b{display:flex;align-items:center;height:48px;margin-top:72px;padding-left:32px;width:1383px}.b>fit-text{padding-top:2px}
.line{margin:11px 0 0 18px;width:1397px;height:10px;border:1px solid #e6e8ec;box-sizing:border-box}`,
`<div class="top"><div class="bc"><fit-text w="74">Projects</fit-text><fit-text style="margin-left:13px">/</fit-text><fit-text w="107" style="margin-left:15px">IMS Project</fit-text></div><h1><fit-text w="126" style="-webkit-text-stroke:.7px">Backlog</fit-text></h1>
<div class="tools"><div class="q"><ui-icon name="glass"></ui-icon></div><user-avatar style="--s:48px;margin-left:24px;font-size:20px">SB</user-avatar><ui-icon name="addp" style="margin-left:15px"></ui-icon><fit-text w="40" style="font-weight:500;color:#42526e;margin:3px 0 0 36px">Epic</fit-text><ui-icon name="chev" style="margin-left:16px;color:#344563"></ui-icon><ui-button style="width:152px;margin-left:auto"><ui-icon name="insights" style="margin-left:2px"></ui-icon><fit-text w="75" style="padding-top:2px">Insights</fit-text></ui-button></div></div>
<div class="scroll"><div class="col"><sprint-panel></sprint-panel><div class="b"><ui-icon name="chev" style="margin-top:-4px"></ui-icon><fit-text w="75" style="font-weight:500;margin-left:11px">Backlog</fit-text><fit-text w="85" style="color:#6b778c;margin-left:10px">(4 issues)</fit-text><count-badges style="margin-left:auto"></count-badges><ui-button style="width:158px;margin-left:11px"><fit-text w="123" style="padding-top:1px">Create sprint</fit-text></ui-button></div><div class="line"></div></div><scroll-bar></scroll-bar></div>`);
define('task-app', `:host{display:flex;flex:none;width:61.400px;height:60px;align-items:center;justify-content:center;position:relative;box-sizing:border-box;padding-bottom:1px}
u{position:absolute;bottom:0;left:7px;right:7px;height:3px;background:#0078d7}:host([active]){background:#ffffff99}:host([active]) u{left:0;right:0}:host([multi]) u{background:linear-gradient(90deg,#0078d7 75%,#66aee7 75%)}
:host([quiet]) u{display:none}`, el=>`<ui-icon name="${el.getAttribute('name')}"></ui-icon><u></u><slot></slot>`);
define('num-badge', `:host{position:absolute;width:24px;height:24px;box-sizing:border-box;border:1.500px solid #777;border-radius:50%;background:#d5d9daee;font-size:17px;line-height:21px;text-align:center;color:#000;-webkit-text-stroke:.4px}`, `<slot></slot>`);
define('task-bar', `:host{display:flex;align-items:center;height:60px;background:linear-gradient(90deg,#e1deed 0,#dce2ed 500px,#d3e9ed 620px,#cdf1ec 720px,#cef0e8 1000px,#d0f0e2 1300px,#d3f0de 1920px);color:#000;font-size:21px;position:relative}
.start{width:72px;display:flex;justify-content:center}.s{width:516px;height:60px;box-sizing:border-box;border:2px solid #ccc;background:#fff;display:flex;align-items:center;padding-left:16px;color:#222}
.sc{width:25px;height:60px;background:#efefef;display:flex;flex-direction:column;justify-content:space-between;align-items:center;padding:11px 0 9px;box-sizing:border-box;border-left:1px solid #fff}
.clk{width:96px;font-size:17.800px;line-height:28px;display:flex;flex-direction:column;align-items:center;margin-left:28px}.n{position:relative;margin-left:28px}.end{margin-left:auto;width:8px;height:60px;border-left:1px solid #96b3a3;box-sizing:border-box}`,
`<div class="start"><ui-icon name="win"></ui-icon></div><div class="s"><ui-icon name="bigglass"></ui-icon><fit-text w="198" style="margin:4px 0 0 17px">Type here to search</fit-text></div>
<ui-icon name="taskview" style="margin-left:23px"></ui-icon><task-app name="explorer" multi style="margin-left:27px"></task-app><task-app name="mail" quiet><num-badge style="left:37px;top:30px">2</num-badge></task-app><task-app name="chromec" active style="width:60px;margin-left:1px"></task-app><task-app name="spotify" style="margin-left:1px"></task-app><task-app name="eclipse"></task-app><task-app name="mysql"></task-app><task-app name="notepad" multi></task-app><task-app name="git"></task-app>
<div class="sc" style="margin-left:4px"><ui-icon name="sup"></ui-icon><ui-icon name="sdown"></ui-icon></div>
<ui-icon name="weather" style="margin:-2px 0 0 37px"></ui-icon><fit-text w="43" style="margin:3px 0 0 14px">10°C</fit-text><ui-icon name="caret" style="margin-left:31px"></ui-icon><ui-icon name="cloud" style="margin-left:26px"></ui-icon><ui-icon name="mic" style="margin-left:27px"></ui-icon><ui-icon name="update" style="margin-left:28px"></ui-icon><ui-icon name="battery" style="margin:-2px 0 0 23px"></ui-icon><ui-icon name="wifi" style="margin:4px 0 0 26px"></ui-icon><ui-icon name="volume" style="margin-left:25px"></ui-icon><ui-icon name="pen" style="margin-left:31px"></ui-icon>
<div class="clk"><fit-text w="44">12:06</fit-text><fit-text w="95">22/10/2021</fit-text></div><div class="n"><ui-icon name="notif"></ui-icon><num-badge style="left:11px;top:11px">7</num-badge></div><div class="end"></div>`);
define('desktop-app', `:host{display:flex;flex-direction:column;width:1920px;height:1080px;overflow:hidden}.body{display:flex;height:828px}`,
`<browser-tabs></browser-tabs><browser-toolbar></browser-toolbar><jira-nav></jira-nav><div class="body"><jira-sidebar></jira-sidebar><backlog-main></backlog-main></div><task-bar></task-bar>`);
</script>
</body>
</html>
